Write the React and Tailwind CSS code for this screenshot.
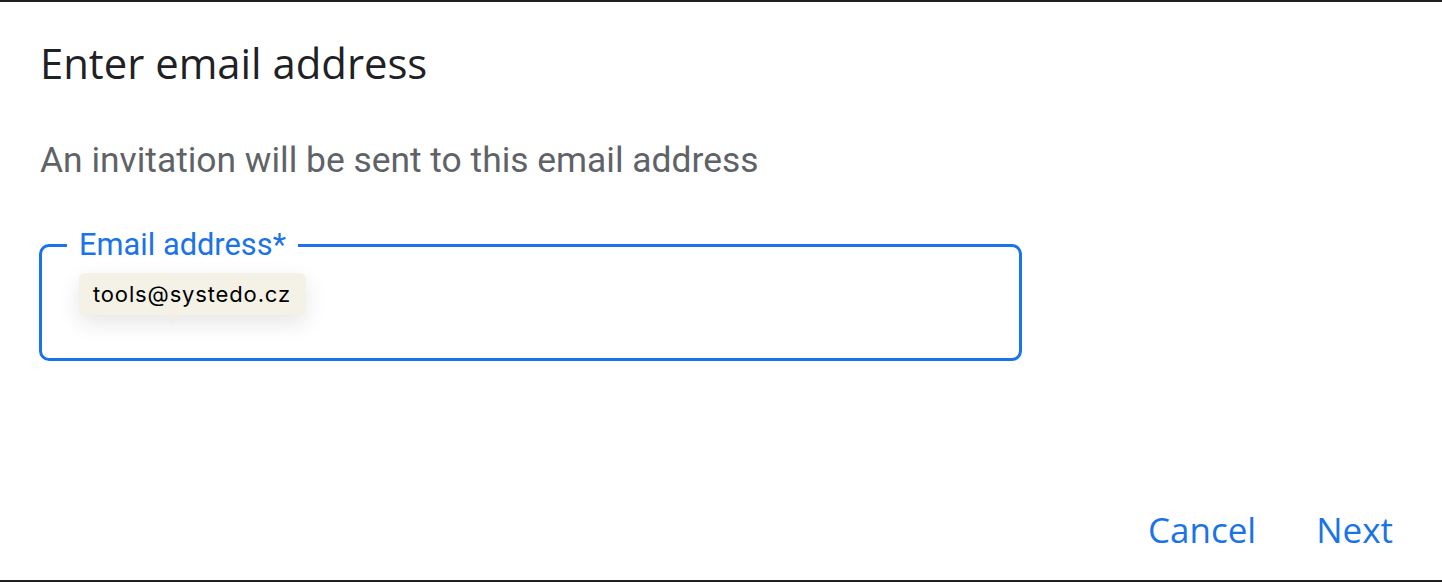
import React from 'react';

// Invite dialog: title, hint, outlined email field with a tooltip, actions
export default function App() {
  return (
    <div className="w-full h-[582px] bg-white border-y-2 border-[#1f1f1f] flex flex-col">
      <div className="pl-[39px] pt-[37px]">
        <h1 className="ml-[1px] text-[41.8px] leading-[48px] text-[#202124] font-normal" style={{ fontFamily: '"Open Sans", sans-serif' }}>
          Enter email address
        </h1>
        <p className="ml-[1px] mt-[52px] text-[35.4px] leading-[42px] text-[#5f6368]" style={{ fontFamily: 'Roboto, sans-serif' }}>
          An invitation will be sent to this email address
        </p>

        <fieldset className="mt-[48px] w-[983px] border-[3px] border-[#1a73e8] rounded-[10px] pl-[37px] pb-[43px] pr-0 pt-0 m-0">
          <legend
            className="-ml-[12px] px-[12px] text-[30.8px] leading-[32px] text-[#1a73e8]"
            style={{ fontFamily: 'Roboto, sans-serif' }}
          >
            Email address*
          </legend>
          <div className="mt-[12px] relative inline-flex items-center h-[42px] pl-[14px] pr-[15px] rounded-[6px] bg-[#f4f2e7] shadow-[0_8px_22px_rgba(0,0,0,0.10)]">
            <span className="text-[22px] tracking-[0.85px] text-black" style={{ fontFamily: 'Inter, sans-serif' }}>
              tools@systedo.cz
            </span>
            <span className="absolute left-[87px] top-full w-0 h-0 border-x-[7px] border-x-transparent border-t-[8px] border-t-[#f0eee3]" />
          </div>
        </fieldset>
      </div>

      <div className="mt-auto pb-[29px] pr-[37px] flex justify-end gap-[36px]" style={{ fontFamily: '"Open Sans", sans-serif' }}>
        <button className="px-[12px] text-[35px] leading-[42px] font-medium text-[#1a73e8]">Cancel</button>
        <button className="px-[12px] text-[35px] leading-[42px] font-medium text-[#1a73e8]">Next</button>
      </div>
    </div>
  );
}
